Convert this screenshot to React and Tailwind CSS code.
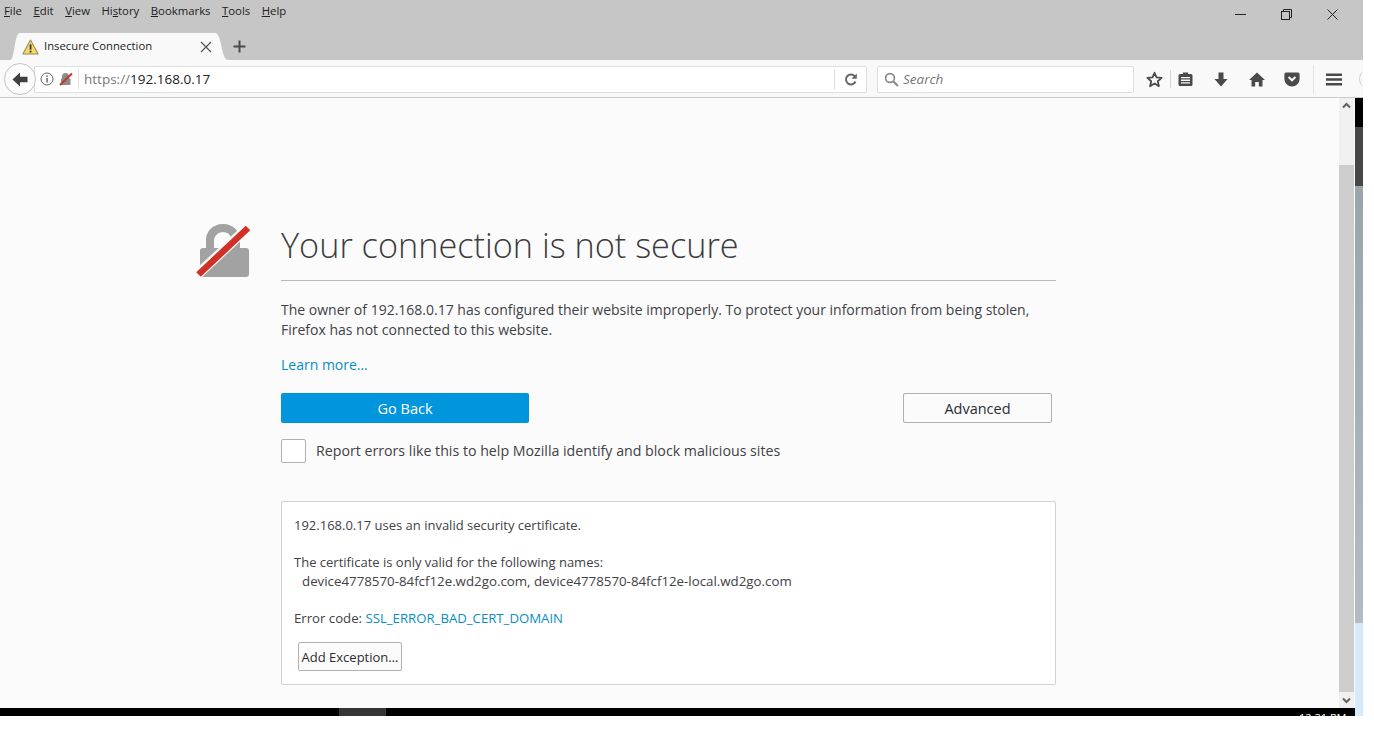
const MENUS = [
  ["F", "ile"],
  ["E", "dit"],
  ["V", "iew"],
  ["Hi", "s", "tory"],
  ["B", "ookmarks"],
  ["T", "ools"],
  ["H", "elp"],
];

function MenuLabel({ parts }) {
  // the underlined letter is the first part, except for History
  if (parts.length === 3) {
    return (
      <span>
        {parts[0]}
        <span className="underline">{parts[1]}</span>
        {parts[2]}
      </span>
    );
  }
  return (
    <span>
      <span className="underline">{parts[0]}</span>
      {parts[1]}
    </span>
  );
}

function WarningIcon() {
  return (
    <svg width="17" height="16" viewBox="0 0 16 15">
      <path d="M8 1 L15.2 14 L0.8 14 Z" fill="#f5d76a" stroke="#9a8a55" strokeWidth="1" strokeLinejoin="round" />
      <rect x="7.2" y="5" width="1.7" height="5" fill="#3a3a3a" />
      <rect x="7.2" y="11" width="1.7" height="1.7" fill="#3a3a3a" />
    </svg>
  );
}

function TitleBar() {
  return (
    <div className="h-[33px] flex items-start justify-between bg-[#c6c6c6]">
      <div className="flex gap-[11.5px] pl-[4px] pt-[2px] text-[11.35px] leading-[17px] text-[#222]">
        {MENUS.map((m) => (
          <MenuLabel key={m.join("")} parts={m} />
        ))}
      </div>
      <div className="flex items-center gap-[35px] pt-[9px] pr-[25px]">
        <svg width="11" height="11" viewBox="0 0 11 11"><path d="M0 5.5H11" stroke="#222" strokeWidth="1" /></svg>
        <svg width="11" height="11" viewBox="0 0 11 11" fill="none" stroke="#222" strokeWidth="1">
          <rect x="0.5" y="2.5" width="8" height="8" />
          <path d="M2.5 2.5V0.5H10.5V8.5H8.5" />
        </svg>
        <svg width="11" height="11" viewBox="0 0 11 11"><path d="M0.5 0.5L10.5 10.5M10.5 0.5L0.5 10.5" stroke="#222" strokeWidth="1" /></svg>
      </div>
    </div>
  );
}

function TabStrip() {
  return (
    <div className="h-[27px] flex items-stretch bg-[#c6c6c6] pl-[10px]">
      <svg width="10" height="27" viewBox="0 0 10 27">
        <path d="M0 27 C5 27 4 0 10 0 V27 Z" fill="#f9f9f9" />
      </svg>
      <div className="w-[195px] flex items-center bg-[#f9f9f9] pl-[2px]">
        <WarningIcon />
        <span className="ml-[5px] flex-1 text-[11.3px] text-[#222]">Insecure Connection</span>
        <svg width="12" height="12" viewBox="0 0 12 12" className="mr-[3px]">
          <path d="M1 1L11 11M11 1L1 11" stroke="#555" strokeWidth="1.2" />
        </svg>
      </div>
      <svg width="13" height="27" viewBox="0 0 13 27">
        <path d="M0 0 C7 0 6 27 13 27 H0 Z" fill="#f9f9f9" />
      </svg>
      <div className="flex items-center pl-[5px]">
        <svg width="13" height="13" viewBox="0 0 13 13">
          <path d="M6.5 0.5V12.5M0.5 6.5H12.5" stroke="#4a4a4a" strokeWidth="2" />
        </svg>
      </div>
    </div>
  );
}

function UrlBar() {
  return (
    <div className="flex items-center w-[833px] h-[27px] -ml-[2px] bg-white border border-[#dedede] rounded-r-[2px]">
      <div className="flex items-center gap-[5px] pl-[5px] w-[43px] shrink-0">
        <svg width="14" height="14" viewBox="0 0 14 14" fill="none" className="shrink-0">
          <circle cx="7" cy="7" r="6" stroke="#666" strokeWidth="1" />
          <rect x="6.3" y="6" width="1.5" height="4.5" fill="#666" />
          <rect x="6.3" y="3.4" width="1.5" height="1.5" fill="#666" />
        </svg>
        <svg width="14" height="14" viewBox="0 0 14 14" className="shrink-0">
          <path d="M3 6.5V4.5a3.5 3.5 0 0 1 7 0V6.5h1.5V13H2V6.5Z" fill="#8c8c8c" />
          <path d="M1 13L13 1.5" stroke="#c8342a" strokeWidth="2" />
        </svg>
      </div>
      <div className="w-px h-[20px] bg-[#dedede]" />
      <div className="flex-1 pl-[5px] pt-[1px] text-[13.5px] text-[#222]">
        <span className="text-[#7a7a7a]">https://</span>192.168.0.17
      </div>
      <div className="w-px h-[20px] bg-[#dedede]" />
      <div className="w-[31px] flex justify-center">
        <svg width="13" height="13" viewBox="0 0 13 13" fill="none">
          <path d="M11 3.5A5 5 0 1 0 11.5 8.5" stroke="#666" strokeWidth="2" />
          <path d="M12.8 0.5V5.8H7.5Z" fill="#666" />
        </svg>
      </div>
    </div>
  );
}

function SearchBox() {
  return (
    <div className="flex items-center w-[257px] h-[27px] ml-[10px] bg-white border border-[#dedede] rounded-[2px] pl-[6px]">
      <svg width="15" height="15" viewBox="0 0 15 15" fill="none">
        <circle cx="6" cy="6" r="4.4" stroke="#8a8a8a" strokeWidth="1.7" />
        <path d="M9.5 9.5L14 14" stroke="#8a8a8a" strokeWidth="2.2" />
      </svg>
      <span className="ml-[4px] pt-[1px] text-[13.5px] italic text-[#777]">Search</span>
    </div>
  );
}

function ToolbarIcons() {
  return (
    <div className="flex items-center h-full">
      <div className="w-[36px] flex justify-center pl-[4px]">
        <svg width="17" height="17" viewBox="0 0 17 17" fill="none">
          <path d="M8.5 1.8L10.5 6.4L15.6 6.9L11.8 10.2L12.9 15.2L8.5 12.6L4.1 15.2L5.2 10.2L1.4 6.9L6.5 6.4Z" stroke="#4a4a4a" strokeWidth="1.8" strokeLinejoin="round" />
        </svg>
      </div>
      <div className="w-px h-[18px] bg-[#d6d6d6]" />
      <div className="w-[28px] flex justify-center">
        <svg width="15" height="16" viewBox="0 0 15 16">
          <path d="M5 1.5H10V3H13A1.5 1.5 0 0 1 14.5 4.5V13.5A1.5 1.5 0 0 1 13 15H2A1.5 1.5 0 0 1 0.5 13.5V4.5A1.5 1.5 0 0 1 2 3H5Z" fill="#4a4a4a" />
          <path d="M3 6H12V7.3H3ZM3 8.6H12V9.9H3ZM3 11.2H12V12.5H3Z" fill="#f9f9f9" />
        </svg>
      </div>
      <div className="w-[44px] flex justify-center">
        <svg width="14" height="15" viewBox="0 0 14 15">
          <path d="M4.5 0.5H9.5V7H13.5L7 14.5L0.5 7H4.5Z" fill="#4a4a4a" />
        </svg>
      </div>
      <div className="w-[28px] flex justify-center">
        <svg width="16" height="15" viewBox="0 0 16 15">
          <path d="M8 0.5L16 8H13.5V14.5H9.8V10H6.2V14.5H2.5V8H0Z" fill="#4a4a4a" />
        </svg>
      </div>
      <div className="w-[42px] flex justify-center">
        <svg width="16" height="15" viewBox="0 0 16 15">
          <path d="M2 0.5H14A1.6 1.6 0 0 1 15.6 2V7A7.6 7.6 0 0 1 0.4 7V2A1.6 1.6 0 0 1 2 0.5Z" fill="#4a4a4a" />
          <path d="M4.6 5L8 8.3L11.4 5" stroke="#f9f9f9" strokeWidth="2" fill="none" />
        </svg>
      </div>
      <div className="w-px h-[29px] bg-[#e2e2e2]" />
      <div className="w-[40px] flex justify-center">
        <svg width="16" height="13" viewBox="0 0 16 13">
          <path d="M0 0.5H16V3H0ZM0 5.2H16V7.7H0ZM0 10H16V12.5H0Z" fill="#4a4a4a" />
        </svg>
      </div>
      <div className="ml-[5px] w-[3px] h-[22px] overflow-hidden">
        <div className="w-[22px] h-[22px] rounded-full border border-[#cfcfcf]" />
      </div>
    </div>
  );
}

function Toolbar() {
  return (
    <div className="h-[38px] flex items-center pl-[4px] pt-[1px] bg-[#f9f9f9] border-b border-[#c9c9c9]">
      <div className="w-[32px] h-[32px] shrink-0 z-10 rounded-full bg-[#fbfbfb] border border-[#c4c4c4] flex items-center justify-center">
        <svg width="18" height="15" viewBox="0 0 16 14">
          <path d="M8 0.5L1 7L8 13.5V9.5H15V4.5H8Z" fill="#3f3f3f" />
        </svg>
      </div>
      <UrlBar />
      <SearchBox />
      <ToolbarIcons />
    </div>
  );
}

function BrokenLock() {
  return (
    <svg width="55" height="54" viewBox="0 0 55 54" className="shrink-0">
      <path
        d="M27 0C16 0 10 8 10 16V24H7C5 24 4 25 4 27V50C4 52 5 53 7 53H50C52 53 53 52 53 50V27C53 25 52 24 50 24H44V16C44 8 38 0 27 0ZM27 8C32 8 36 12 36 17V24H18V17C18 12 22 8 27 8Z"
        fill="#a2a2a2"
      />
      <path d="M1.5 50.5L52.5 3" stroke="#fbfbfb" strokeWidth="10" />
      <path d="M2.5 50.5L52 4" stroke="#d13027" strokeWidth="6.5" />
    </svg>
  );
}

function ErrorPage() {
  return (
    <div className="flex-1 min-w-0 bg-[#fbfbfb] pt-[126px] pl-[196px] text-[#414146]">
      <div className="flex gap-[30px]">
        <BrokenLock />
        <div className="w-[775px]">
          <h1 className="h-[57px] border-b border-[#b9b9b9] text-[34.25px] leading-[42px] font-light text-[#3b3b40]">
            Your connection is not secure
          </h1>
          <p className="mt-[19px] text-[14px] leading-[20px] whitespace-nowrap">
            The owner of 192.168.0.17 has configured their website improperly. To protect your information from being stolen,
            <br />
            Firefox has not connected to this website.
          </p>
          <p className="mt-[15px] text-[14px] leading-[20px] text-[#0a8dc0]">Learn more…</p>
          <div className="mt-[18px] flex justify-between pr-[4px]">
            <div className="w-[248px] h-[30px] flex items-center justify-center pt-[2px] rounded-[2px] bg-[#0095dd] text-white text-[14.5px]">
              Go Back
            </div>
            <div className="w-[149px] h-[30px] flex items-center justify-center pt-[2px] rounded-[2px] border border-[#b1b1b1] bg-[#fbfbfb] text-[14.5px] text-[#2c2c30]">
              Advanced
            </div>
          </div>
          <div className="mt-[16px] flex items-center gap-[10px]">
            <div className="w-[25px] h-[24px] rounded-[2px] border border-[#b1b1b1] bg-white" />
            <span className="text-[14.2px] leading-[24px]">Report errors like this to help Mozilla identify and block malicious sites</span>
          </div>
          <div className="mt-[38px] h-[184px] pt-[14px] pl-[12px] bg-white border border-[#d2d2d2] rounded-[2px] text-[13px] leading-[18px]">
            <p>192.168.0.17 uses an invalid security certificate.</p>
            <p className="mt-[19px]">The certificate is only valid for the following names:</p>
            <p className="mt-px pl-[8px] text-[13.3px]">device4778570-84fcf12e.wd2go.com, device4778570-84fcf12e-local.wd2go.com</p>
            <p className="mt-[19px] text-[13.2px]">
              Error code: <span className="text-[#0a8dc0]">SSL_ERROR_BAD_CERT_DOMAIN</span>
            </p>
            <div className="mt-[15px] ml-[4px] w-[104px] h-[29px] flex items-center justify-center rounded-[2px] border border-[#b1b1b1] bg-[#fbfbfb] text-[13px] text-[#2c2c30]">
              Add Exception…
            </div>
          </div>
        </div>
      </div>
    </div>
  );
}

function Scrollbar() {
  return (
    <div className="w-[16px] shrink-0 flex flex-col bg-[#f0f0f0] border-r border-[#fbfbfb]">
      <div className="h-[67px] pt-[4px] flex justify-center">
        <svg width="9" height="7" viewBox="0 0 9 7"><path d="M1 5.5L4.5 2L8 5.5" stroke="#606060" strokeWidth="2" fill="none" /></svg>
      </div>
      <div className="flex-1 bg-[#cdcdcd]" />
      <div className="h-[16px] flex justify-center items-center">
        <svg width="9" height="7" viewBox="0 0 9 7"><path d="M1 1.5L4.5 5L8 1.5" stroke="#606060" strokeWidth="2" fill="none" /></svg>
      </div>
    </div>
  );
}

function DesktopStrip() {
  return (
    <div className="w-[8px] shrink-0 flex flex-col">
      <div className="h-[29px] bg-black" />
      <div className="h-[59px] bg-[#474747]" />
      <div className="h-[437px] bg-gradient-to-b from-[#98a5a9] to-[#b3bcc1]" />
      <div className="flex-1 bg-[#d5eafa]" />
    </div>
  );
}

function Taskbar() {
  return (
    <div className="h-[8px] flex bg-black overflow-hidden">
      <div className="ml-[339px] w-[47px] bg-[#353535]" />
      <div className="ml-[913px] pt-[3px] text-[11px] leading-[14px] text-white whitespace-nowrap">12:31 PM</div>
    </div>
  );
}

export default function App() {
  return (
    <div className="w-[1374px] h-[736px] bg-white overflow-hidden font-['Open_Sans',sans-serif]">
      <div className="w-[1363px] h-[716px] flex flex-col">
        <TitleBar />
        <TabStrip />
        <Toolbar />
        <div className="flex-1 min-h-0 flex">
          <div className="w-[1355px] flex flex-col">
            <div className="flex-1 min-h-0 flex">
              <ErrorPage />
              <Scrollbar />
            </div>
            <Taskbar />
          </div>
          <DesktopStrip />
        </div>
      </div>
    </div>
  );
}
